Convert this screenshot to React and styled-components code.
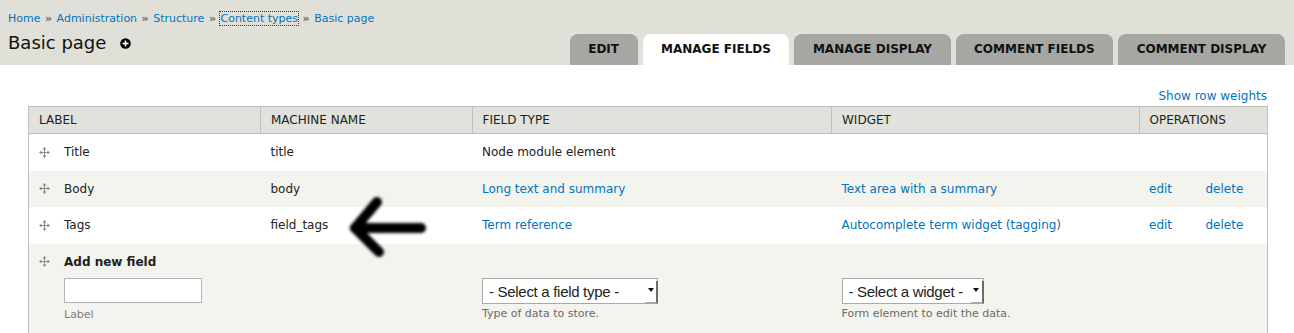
import React from "react";
import styled, { createGlobalStyle } from "styled-components";

const GlobalStyle = createGlobalStyle`
    body {
        margin: 0;
        font-family: "DejaVu Sans", Verdana, sans-serif;
        color: #222;
        background: #fff;
    }
`;

const Page = styled.div`
    position: relative;
    width: 1294px;
`;

const Header = styled.div`
    background: #e0e0d8;
    padding: 12px 9px 0 8px;
`;

const Breadcrumb = styled.div`
    font-size: 11px;
    line-height: 14px;
    color: #555;
`;

const Crumb = styled.a`
    color: #0074bd;
    text-decoration: none;
    outline: ${props => props.$focused ? "1px dotted #1a3a5a" : "none"};
    outline-offset: 0px;
`;

const Sep = styled.span`
    color: #666;
    font-weight: bold;
    margin: 0 4.5px;
`;

const TitleBar = styled.div`
    display: flex;
    justify-content: space-between;
    align-items: flex-end;
`;

const Title = styled.h1`
    align-self: flex-start;
    margin: 6px 0 0 0;
    font-size: 18px;
    line-height: 22px;
    font-weight: normal;
    color: #111;
    display: flex;
    align-items: center;
    gap: 14px;
`;

const Tabs = styled.ul`
    display: flex;
    gap: 5px;
    margin: 8px 0 0 0;
    padding: 0;
    list-style: none;
`;

const Tab = styled.li`
    height: 31px;
    line-height: 31px;
    padding: 0 18.5px;
    border-radius: 8px 8px 0 0;
    background: ${props => props.$active ? "#fff" : "#a6a7a2"};
    color: #111;
    font-size: 12px;
    font-weight: bold;
    text-transform: uppercase;
    white-space: nowrap;
`;

const Content = styled.div`
    padding: 24px 27px 0 28px;
`;

const WeightsLine = styled.div`
    text-align: right;
    font-size: 12px;
    line-height: 14px;
    margin-bottom: 3px;
`;

const Link = styled.a`
    color: #0074bd;
    text-decoration: none;
`;

const Table = styled.table`
    width: 1239px;
    border-collapse: collapse;
    table-layout: fixed;
    border: 1px solid #bebfb9;
    font-size: 12px;
`;

const Th = styled.th`
    background: #e1e2dc;
    border: 1px solid #bebfb9;
    padding: 6px 10px;
    line-height: 14px;
    text-align: left;
    font-weight: normal;
    text-transform: uppercase;
    color: #222;
`;

const Row = styled.tr`
    background: ${props => props.$shaded ? "#f3f4ee" : "#fff"};
`;

const Td = styled.td`
    padding: 10px 10px ${props => props.$bottom || "10px"} 10px;
    line-height: 16.5px;
    vertical-align: top;
    white-space: nowrap;
`;

const LabelCell = styled.div`
    display: flex;
    align-items: flex-start;
`;

const HandleBox = styled.span`
    width: 25px;
    flex: none;
    display: flex;
    align-items: center;
    height: 16.5px;
`;

const FieldStack = styled.div`
    display: flex;
    flex-direction: column;
    align-items: flex-start;
`;

const Strong = styled.span`
    font-weight: bold;
`;

const TextInput = styled.input`
    box-sizing: border-box;
    width: 138px;
    height: 25px;
    margin-top: 8px;
    border: 1px solid #b4b4b4;
    background: #fff;
    font-size: 12px;
`;

const Description = styled.div`
    font-size: 11px;
    line-height: 14px;
    color: ${props => props.$light ? "#808080" : "#6a6a6a"};
    margin-top: ${props => props.$gap || "5px"};
`;

const SelectWrap = styled.div`
    position: relative;
    display: inline-block;
    margin-top: ${props => props.$offset || "0"};
`;

const Select = styled.select`
    appearance: none;
    box-sizing: border-box;
    width: ${props => props.$width};
    height: 26px;
    border: 1px solid #aaa;
    border-radius: 0;
    background: #fff;
    padding: 0 0 0 6px;
    font-family: "Liberation Sans", Arial, sans-serif;
    font-size: 15px;
    letter-spacing: -0.3px;
    color: #222;
`;

const ArrowButton = styled.span`
    position: absolute;
    top: 3px;
    right: 0;
    bottom: 0;
    width: 11px;
    border-right: 2px solid #6b6b6b;
    border-bottom: 2px solid #a8a8a8;
    display: flex;
    align-items: center;
    justify-content: center;
    pointer-events: none;

    &::after {
        content: "";
        margin-top: -3px;
        border-left: 3px solid transparent;
        border-right: 3px solid transparent;
        border-top: 4px solid #111;
    }
`;

const Annotation = styled.svg`
    position: absolute;
    left: 340px;
    top: 190px;
    width: 100px;
    height: 80px;
    pointer-events: none;
`;

const DragHandle = () => (
    <svg width="11" height="11" viewBox="0 0 11 11">
        <g fill="#8a8a8a">
            <rect x="5" y="2" width="1" height="7" />
            <rect x="2" y="5" width="7" height="1" />
            <path d="M5.5 0 L7.5 2.5 H3.5 Z" />
            <path d="M5.5 11 L3.5 8.5 H7.5 Z" />
            <path d="M0 5.5 L2.5 3.5 V7.5 Z" />
            <path d="M11 5.5 L8.5 7.5 V3.5 Z" />
        </g>
    </svg>
);

const AddIcon = () => (
    <svg width="11" height="11" viewBox="0 0 11 11">
        <circle cx="5.5" cy="5.5" r="5.3" fill="#000" />
        <rect x="4.7" y="2.5" width="1.6" height="6" fill="#fff" />
        <rect x="2.5" y="4.7" width="6" height="1.6" fill="#fff" />
    </svg>
);

const fields = [
    { label: "Title", machine: "title", type: "Node module element" },
    { label: "Body", machine: "body", type: "Long text and summary", widget: "Text area with a summary", ops: true },
    { label: "Tags", machine: "field_tags", type: "Term reference", widget: "Autocomplete term widget (tagging)", ops: true },
];

const tabs = ["Edit", "Manage fields", "Manage display", "Comment fields", "Comment display"];

export default function App() {
    return (
        <Page>
            <GlobalStyle />
            <Header>
                <Breadcrumb>
                    <Crumb href="#">Home</Crumb><Sep>»</Sep>
                    <Crumb href="#">Administration</Crumb><Sep>»</Sep>
                    <Crumb href="#">Structure</Crumb><Sep>»</Sep>
                    <Crumb href="#" $focused>Content types</Crumb><Sep>»</Sep>
                    <Crumb href="#">Basic page</Crumb>
                </Breadcrumb>
                <TitleBar>
                    <Title>Basic page <AddIcon /></Title>
                    <Tabs>
                        {tabs.map(t => <Tab key={t} $active={t === "Manage fields"}>{t}</Tab>)}
                    </Tabs>
                </TitleBar>
            </Header>

            <Content>
                <WeightsLine><Link href="#">Show row weights</Link></WeightsLine>
                <Table>
                    <colgroup>
                        <col style={{ width: "232px" }} />
                        <col style={{ width: "211.5px" }} />
                        <col style={{ width: "359.5px" }} />
                        <col style={{ width: "307.5px" }} />
                        <col style={{ width: "56.5px" }} />
                        <col style={{ width: "72px" }} />
                    </colgroup>
                    <thead>
                        <tr>
                            <Th>Label</Th>
                            <Th>Machine name</Th>
                            <Th>Field type</Th>
                            <Th>Widget</Th>
                            <Th colSpan={2}>Operations</Th>
                        </tr>
                    </thead>
                    <tbody>
                        {fields.map((f, i) => (
                            <Row key={f.label} $shaded={i % 2 === 1}>
                                <Td>
                                    <LabelCell>
                                        <HandleBox><DragHandle /></HandleBox>
                                        {f.label}
                                    </LabelCell>
                                </Td>
                                <Td>{f.machine}</Td>
                                <Td>{f.widget ? <Link href="#">{f.type}</Link> : f.type}</Td>
                                <Td>{f.widget && <Link href="#">{f.widget}</Link>}</Td>
                                <Td>{f.ops && <Link href="#">edit</Link>}</Td>
                                <Td>{f.ops && <Link href="#">delete</Link>}</Td>
                            </Row>
                        ))}
                        <Row $shaded>
                            <Td $bottom="16px">
                                <LabelCell>
                                    <HandleBox><DragHandle /></HandleBox>
                                    <FieldStack>
                                        <Strong>Add new field</Strong>
                                        <TextInput type="text" />
                                        <Description $light>Label</Description>
                                    </FieldStack>
                                </LabelCell>
                            </Td>
                            <Td />
                            <Td>
                                <SelectWrap $offset="24.5px">
                                    <Select $width="176px" defaultValue="">
                                        <option value="">- Select a field type -</option>
                                    </Select>
                                    <ArrowButton />
                                </SelectWrap>
                                <Description $gap="3px">Type of data to store.</Description>
                            </Td>
                            <Td>
                                <SelectWrap $offset="24.5px">
                                    <Select $width="142px" defaultValue="">
                                        <option value="">- Select a widget -</option>
                                    </Select>
                                    <ArrowButton />
                                </SelectWrap>
                                <Description $gap="3px">Form element to edit the data.</Description>
                            </Td>
                            <Td />
                            <Td />
                        </Row>
                    </tbody>
                </Table>
            </Content>

            <Annotation viewBox="0 0 100 80">
                <defs>
                    <filter id="soft" x="-20%" y="-20%" width="140%" height="140%">
                        <feGaussianBlur stdDeviation="1.4" />
                    </filter>
                </defs>
                <g stroke="#000" strokeWidth="10" strokeLinecap="round" strokeLinejoin="round" fill="none" filter="url(#soft)">
                    <path d="M15 38 L81 38" />
                    <path d="M37 12 L15 38 L39 62" />
                </g>
            </Annotation>
        </Page>
    );
}
